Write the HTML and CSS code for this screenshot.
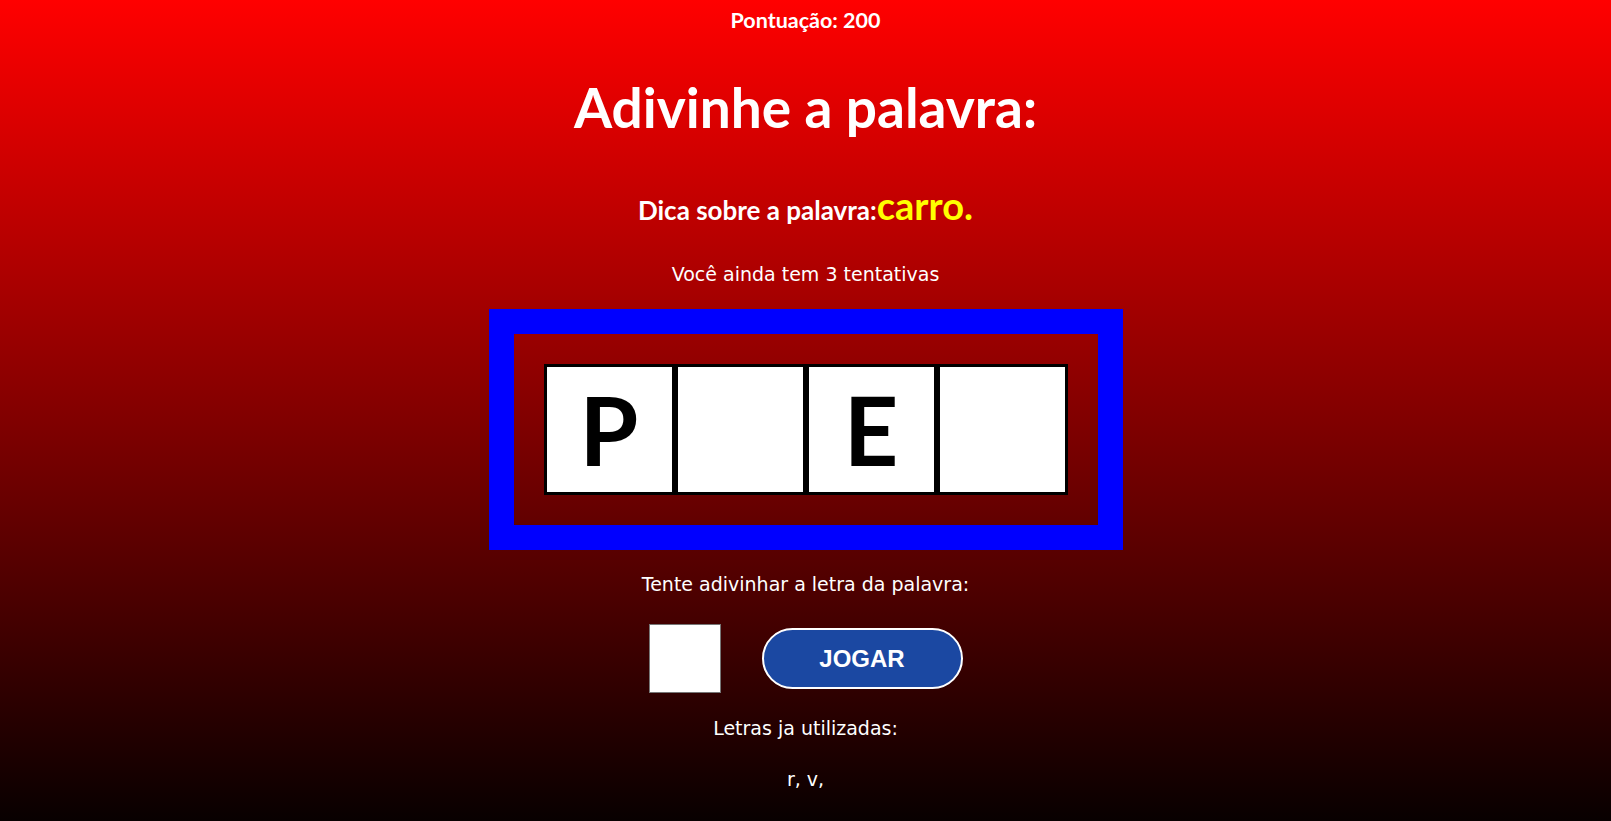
FILE: index.html
```html
<!DOCTYPE html>
<html lang="pt-BR">
<head>
<meta charset="utf-8">
<title>Adivinhe a palavra</title>
<link rel="stylesheet" href="styles.css">
</head>
<body>
<main class="game">
  <p class="score">Pontuação: 200</p>
  <h1 class="title">Adivinhe a palavra:</h1>
  <p class="hint">Dica sobre a palavra:<span class="hint-word">carro.</span></p>
  <p class="tries">Você ainda tem 3 tentativas</p>
  <div class="board">
    <div class="tiles">
      <div class="tile">P</div>
      <div class="tile"></div>
      <div class="tile">E</div>
      <div class="tile"></div>
    </div>
  </div>
  <p class="prompt">Tente adivinhar a letra da palavra:</p>
  <div class="controls">
    <input class="letter-input" type="text" maxlength="1" aria-label="Letra">
    <button class="play" type="button">JOGAR</button>
  </div>
  <p class="used-label">Letras ja utilizadas:</p>
  <p class="used">r, v,</p>
</main>
</body>
</html>
```
FILE: styles.css
```css
html {
  height: 100%;
}

body {
  margin: 0;
  min-height: 100%;
  background: linear-gradient(to bottom, #ff0000 0%, #080000 100%);
  color: #ffffff;
  font-family: "DejaVu Sans", sans-serif;
  text-align: center;
}

.game {
  display: flex;
  flex-direction: column;
  align-items: center;
}

.score {
  margin: 0;
  padding-top: 8px;
  font-family: Lato, "DejaVu Sans", sans-serif;
  font-weight: 700;
  font-size: 21.5px;
  line-height: 24px;
}

.title {
  margin: 43px 0 0;
  font-family: Lato, "DejaVu Sans", sans-serif;
  font-weight: 700;
  font-size: 55px;
  line-height: 64px;
}

.hint {
  margin: 47px 0 0;
  font-family: Lato, "DejaVu Sans", sans-serif;
  font-weight: 700;
  font-size: 26px;
  line-height: 40px;
}

.hint-word {
  color: #ffff00;
  font-size: 38px;
  line-height: 1;
}

.tries,
.prompt,
.used-label,
.used {
  margin: 0;
  font-size: 19px;
  line-height: 24px;
}

.tries {
  margin-top: 32px;
}

.board {
  margin-top: 23px;
  border: 25px solid #0000ff;
  padding: 30px;
}

.tiles {
  display: grid;
  grid-template-columns: repeat(4, 131px);
}

.tile {
  box-sizing: border-box;
  height: 131px;
  border: 3px solid #000000;
  background: #ffffff;
  color: #000000;
  font-family: "Liberation Sans Narrow", Lato, sans-serif;
  font-weight: 700;
  font-size: 95px;
  line-height: 125px;
}

.prompt {
  margin-top: 22px;
}

.controls {
  display: flex;
  align-items: center;
  justify-content: center;
  gap: 41px;
  margin-top: 28px;
}

.letter-input {
  box-sizing: border-box;
  width: 72px;
  height: 69px;
  margin: 0;
  border: 1px solid #767676;
  background: #ffffff;
  padding: 0;
  font-size: 30px;
  text-align: center;
}

.play {
  box-sizing: border-box;
  width: 201px;
  height: 61px;
  border: 2px solid #ffffff;
  border-radius: 31px;
  background: #1b48a2;
  color: #ffffff;
  font-family: "Liberation Sans", Arial, sans-serif;
  font-weight: 700;
  font-size: 24px;
  cursor: pointer;
}

.used-label {
  margin-top: 23px;
}

.used {
  margin-top: 27px;
}
```
